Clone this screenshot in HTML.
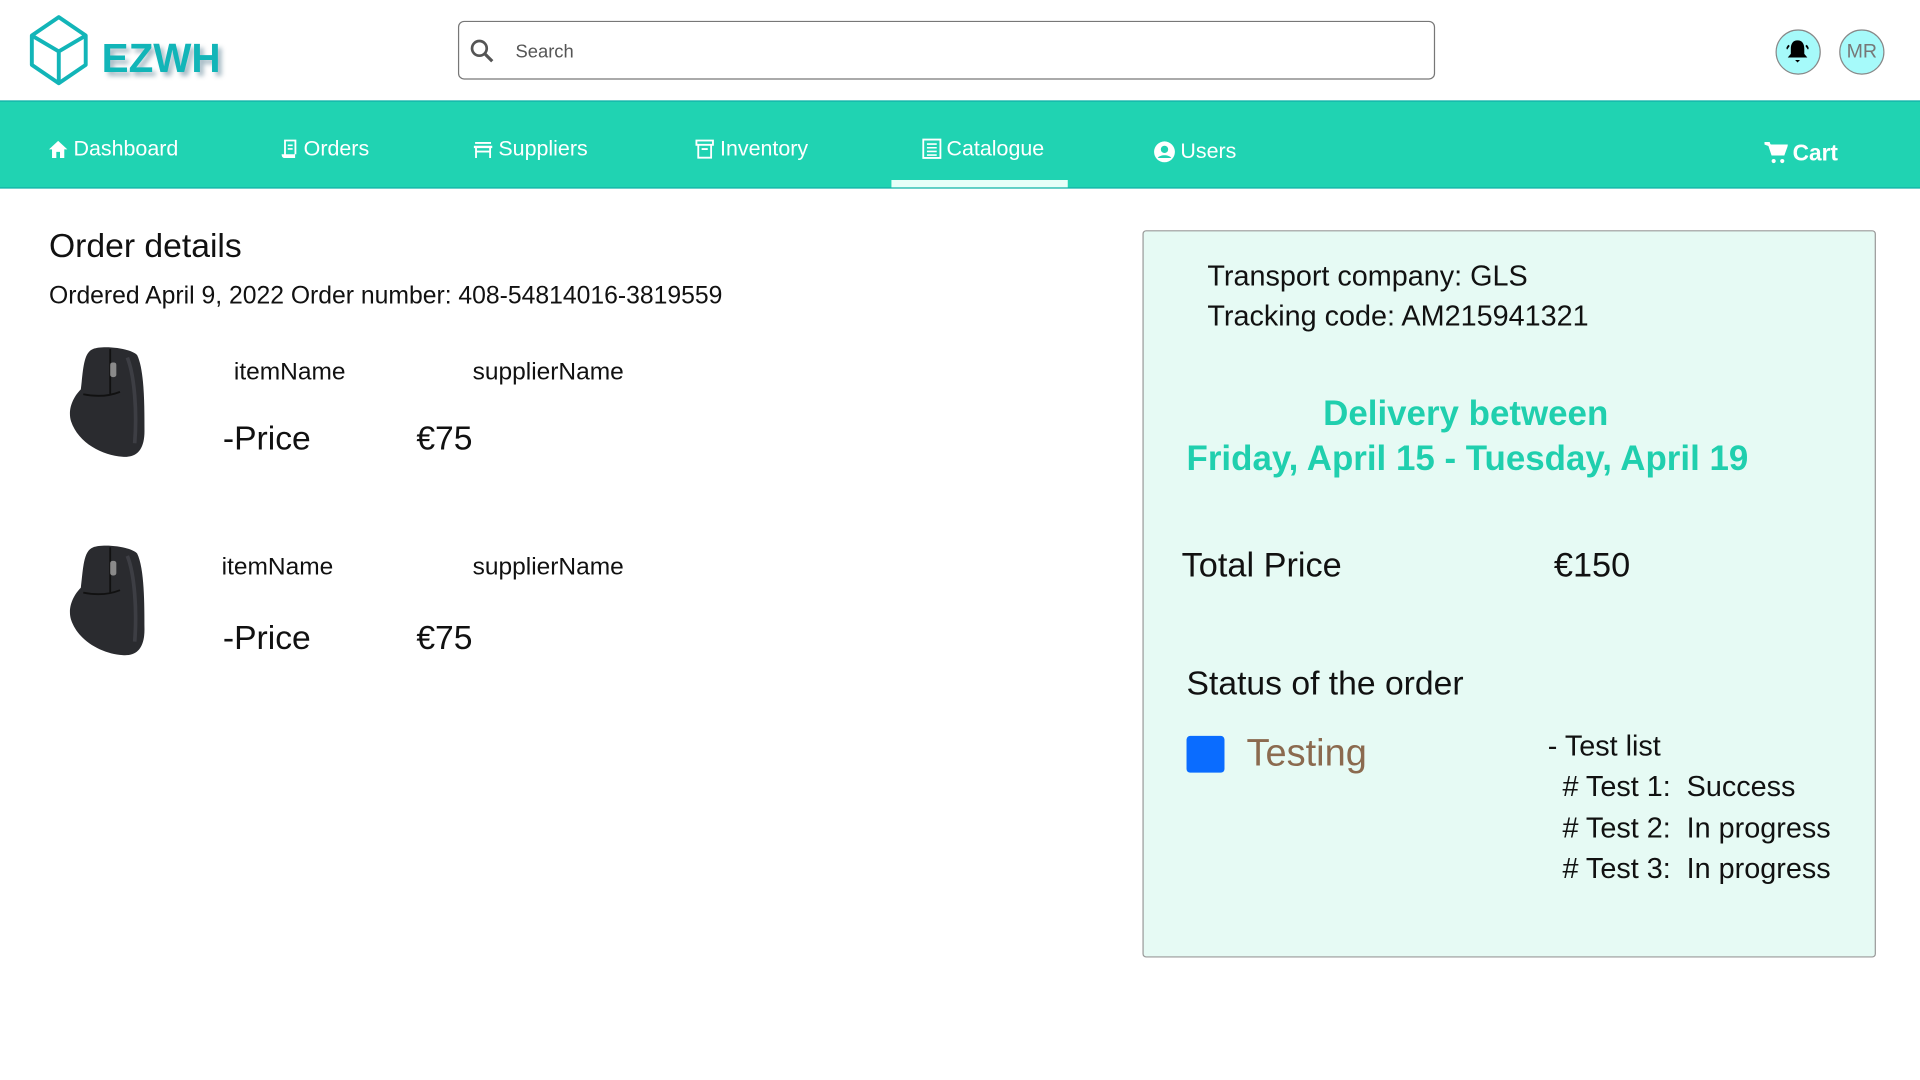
<!DOCTYPE html>
<html><head><meta charset="utf-8">
<style>
html,body{margin:0;padding:0;width:1920px;height:1080px;overflow:hidden;background:#fff}
#s{position:absolute;left:0;top:0;width:1568px;height:882px;transform:scale(1.22449);transform-origin:0 0;font-family:"Liberation Sans",sans-serif;color:#111}
.a{position:absolute;white-space:nowrap}
.nav{position:absolute;left:0;top:82px;width:1568px;height:70px;background:#20d3b2;border-top:1px solid #12b0a8;border-bottom:1px solid #12b0a8}
.ni{position:absolute;color:#fff;font-size:17.5px;top:28px;display:flex;align-items:center;gap:4px}
.ni svg{fill:#fff}
</style></head><body><div id="s">
<svg class="a" style="left:22px;top:11px" width="52" height="60" viewBox="0 0 52 60"><g fill="none" stroke="#12b5b8" stroke-width="3.2" stroke-linejoin="round"><path d="M26 3 L48 18 L48 42 L26 57 L4 42 L4 18 Z"/><path d="M4 18 L26 31 L48 18 M26 31 L26 57"/></g></svg>
<div class="a" style="left:83px;top:29px;font-size:33px;font-weight:bold;color:#12b5b8;text-shadow:3px 3px 4px rgba(0,60,90,.35)">EZWH</div>
<div class="a" style="left:374px;top:17px;width:796px;height:46px;border:1px solid #777;border-radius:5px"></div>
<svg class="a" style="left:383px;top:31px" width="22" height="22" viewBox="0 0 22 22"><circle cx="8.5" cy="8.5" r="6" fill="none" stroke="#555" stroke-width="2.2"/><path d="M13 13 L19 19" stroke="#555" stroke-width="2.6"/></svg>
<div class="a" style="left:421px;top:34px;font-size:15px;color:#555">Search</div>
<div class="a" style="left:1450px;top:24px;width:35px;height:35px;border-radius:50%;background:#a6fafa;border:1px solid #888"></div>
<svg class="a" style="left:1459px;top:32px" width="18" height="20" viewBox="0 0 18 20"><path d="M9 1 C5 1 3.5 4 3.5 8 L3.5 12 L1 15 L17 15 L14.5 12 L14.5 8 C14.5 4 13 1 9 1Z M7 17 L11 17 L9 19Z" fill="#000"/><path d="M2 5 L0 8 M16 5 L18 8" stroke="#000" stroke-width="1.5"/></svg>
<div class="a" style="left:1502px;top:24px;width:35px;height:35px;border-radius:50%;background:#a6fafa;border:1px solid #888;color:#777;font-size:16px;line-height:35px;text-align:center">MR</div>
<div class="nav">
<div class="ni" style="left:39px"><svg width="17" height="16" viewBox="0 0 17 16"><path d="M8.5 1 L16 8 L13.5 8 L13.5 15 L10 15 L10 10 L7 10 L7 15 L3.5 15 L3.5 8 L1 8Z"/></svg>Dashboard</div>
<div class="ni" style="left:229px"><svg width="15" height="17" viewBox="0 0 15 17"><path d="M3 1h10v12h-1.5V2.5h-7V13H3z M1 13h11v3H3c-1 0-2-1-2-3z M6 5h4v1.3H6z M6 8h4v1.3H6z" /></svg>Orders</div>
<div class="ni" style="left:386px"><svg width="17" height="16" viewBox="0 0 17 16"><path d="M2 2h13v1.5H2z M1 5h15v2H1z M2 7h1.5v8H2z M13.5 7H15v8h-1.5z M3.5 9h10v1.5h-10z"/></svg>Suppliers</div>
<div class="ni" style="left:567px"><svg width="17" height="17" viewBox="0 0 17 17"><path d="M1 1h15v5H1z M2.5 6H4v9h9V6h1.5v10.5h-12z M6 8h5v1.5H6z" fill-rule="evenodd"/><rect x="2.5" y="2.5" width="12" height="2" fill="#20d3b2"/></svg>Inventory</div>
<div class="ni" style="left:753px"><svg width="16" height="17" viewBox="0 0 16 17"><path d="M1 1h14v15H1z" fill="none" stroke="#fff" stroke-width="1.5"/><path d="M4 4h8v1.3H4z M4 7h8v1.3H4z M4 10h8v1.3H4z M4 13h8v1.3H4z"/></svg>Catalogue</div>
<div class="ni" style="left:942px;top:30px"><svg width="18" height="18" viewBox="0 0 18 18"><circle cx="9" cy="9" r="8.5"/><circle cx="9" cy="7" r="3" fill="#20d3b2"/><path d="M3.5 14 C5 11 13 11 14.5 14" fill="#20d3b2"/></svg>Users</div>
<div class="ni" style="left:1441px;top:31px;font-weight:bold;font-size:18.5px"><svg width="19" height="18" viewBox="0 0 19 18"><path d="M0 1h3.5l3 9h9l2.5-7H5.5z" fill="#fff" stroke="#fff" stroke-width="2"/><circle cx="7.5" cy="15.5" r="1.7"/><circle cx="14.5" cy="15.5" r="1.7"/></svg>Cart</div>
<div class="a" style="left:728px;top:64px;width:144px;height:6px;background:#e6fff8"></div>
</div>
<div class="a" style="left:40px;top:185px;font-size:27.5px">Order details</div>
<div class="a" style="left:40px;top:231px;font-size:20.2px">Ordered April 9, 2022 Order number: 408-54814016-3819559</div>
<svg class="a" style="left:54px;top:282px" width="68" height="93" viewBox="0 0 68 93"><path d="M22 3 C30 0 52 2 58 8 C64 20 64 50 64 70 C64 85 58 92 46 91 C30 90 10 80 4 62 C1 52 6 42 12 36 C14 20 14 6 22 3Z" fill="#2a2b2f"/><path d="M36 3 L36 40 M14 40 C24 42 34 42 44 38" stroke="#111" stroke-width="1.5" fill="none"/><rect x="36" y="14" width="5" height="12" rx="2" fill="#8a8a8a"/><path d="M50 10 C56 25 58 55 56 80" stroke="#3d3e44" stroke-width="3" fill="none"/></svg>
<svg class="a" style="left:54px;top:444px" width="68" height="93" viewBox="0 0 68 93"><path d="M22 3 C30 0 52 2 58 8 C64 20 64 50 64 70 C64 85 58 92 46 91 C30 90 10 80 4 62 C1 52 6 42 12 36 C14 20 14 6 22 3Z" fill="#2a2b2f"/><path d="M36 3 L36 40 M14 40 C24 42 34 42 44 38" stroke="#111" stroke-width="1.5" fill="none"/><rect x="36" y="14" width="5" height="12" rx="2" fill="#8a8a8a"/><path d="M50 10 C56 25 58 55 56 80" stroke="#3d3e44" stroke-width="3" fill="none"/></svg>
<div class="a" style="left:191px;top:293px;font-size:20px">itemName</div>
<div class="a" style="left:386px;top:293px;font-size:20px">supplierName</div>
<div class="a" style="left:182px;top:342px;font-size:27.5px">-Price</div>
<div class="a" style="left:340px;top:342px;font-size:27.5px">€75</div>
<div class="a" style="left:181px;top:452px;font-size:20px">itemName</div>
<div class="a" style="left:386px;top:452px;font-size:20px">supplierName</div>
<div class="a" style="left:182px;top:505px;font-size:27.5px">-Price</div>
<div class="a" style="left:340px;top:505px;font-size:27.5px">€75</div>
<div class="a" style="left:933px;top:188px;width:597px;height:592px;background:#e6faf4;border:1px solid #999;border-radius:3px"></div>
<div class="a" style="left:986px;top:212px;font-size:23.5px">Transport company: GLS</div>
<div class="a" style="left:986px;top:245px;font-size:23.5px">Tracking code: AM215941321</div>
<div class="a" style="left:933px;top:322px;width:528px;text-align:center;font-size:28.5px;font-weight:bold;color:#20cfae">Delivery between</div>
<div class="a" style="left:969px;top:359px;font-size:28.5px;font-weight:bold;color:#20cfae">Friday, April 15 - Tuesday, April 19</div>
<div class="a" style="left:965px;top:446px;font-size:28px">Total Price</div>
<div class="a" style="left:1269px;top:446px;font-size:28px">€150</div>
<div class="a" style="left:969px;top:542px;font-size:27.5px">Status of the order</div>
<div class="a" style="left:969px;top:601px;width:31px;height:30px;background:#0a6cff;border-radius:3px"></div>
<div class="a" style="left:1018px;top:597px;font-size:31px;color:#8b6a4f">Testing</div>
<div class="a" style="left:1264px;top:596px;font-size:23.5px">- Test list</div>
<div class="a" style="left:1276px;top:629px;font-size:23.5px"># Test 1:&nbsp; Success</div>
<div class="a" style="left:1276px;top:663px;font-size:23.5px"># Test 2:&nbsp; In progress</div>
<div class="a" style="left:1276px;top:696px;font-size:23.5px"># Test 3:&nbsp; In progress</div>
</div></body></html>
